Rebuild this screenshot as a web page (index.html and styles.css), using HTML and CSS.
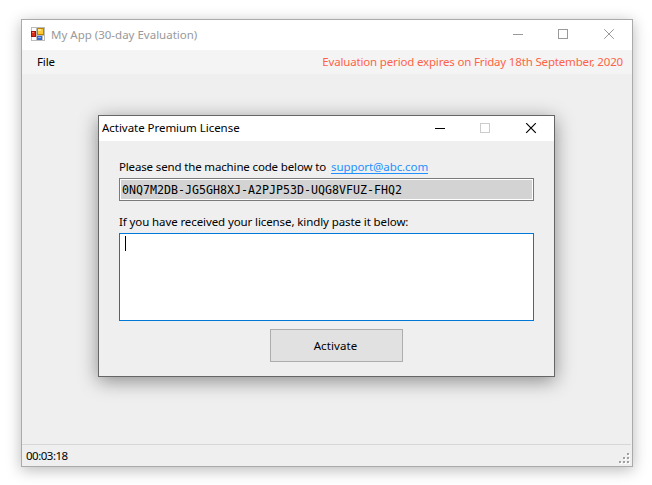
FILE: index.html
```html
<!DOCTYPE html>
<html lang="en">
<head>
<meta charset="utf-8">
<title>My App</title>
<link rel="stylesheet" href="styles.css">
</head>
<body>
<main class="window">
  <header class="titlebar">
    <svg class="app-icon" width="14" height="14" viewBox="0 0 14 14" shape-rendering="crispEdges">
      <path d="M0 0h14v14H0z" fill="#bcbcbc"/>
      <path d="M1 1h4v3H1zM1 10h4v3H1zM12 9h1v4h-1z" fill="#fff"/>
      <path d="M0 4h5v6H0z" fill="#a51208"/><path d="M1 5h3v4H1z" fill="#d8301c"/><path d="M1 5h2v1H1z" fill="#f47a60"/>
      <path d="M6 1h7v7H6z" fill="#b98200"/><path d="M7 2h5v5H7z" fill="#ffc933"/><path d="M7 2h3v2H7z" fill="#ffe58a"/>
      <path d="M6 9h5v4H6z" fill="#3567cf"/><path d="M7 10h3v1H7z" fill="#86b1ff"/>
    </svg>
    <h1 class="title app-title">My App (30-day Evaluation)</h1>
    <svg class="controls" width="112" height="12" viewBox="0 0 112 12" fill="none" stroke="currentColor" shape-rendering="crispEdges">
      <path d="M0 5.500h10M45.500 .5h9v9h-9z"/>
      <path d="M91.200 .2l9.600 9.600M100.800 .2l-9.600 9.600" shape-rendering="auto"/>
    </svg>
  </header>
  <nav class="menubar">
    <span class="file">File</span>
    <span class="notice">Evaluation period expires on Friday 18th September, 2020</span>
  </nav>
  <section class="workspace">
    <div class="dialog">
      <header class="dialog-titlebar">
        <h2 class="title dialog-title">Activate Premium License</h2>
        <svg class="dialog-controls" width="112" height="12" viewBox="0 0 112 12" fill="none" stroke="#000" shape-rendering="crispEdges">
          <path d="M0 5.500h10"/><path d="M45.500 .5h9v9h-9z" stroke="#ccc"/>
          <path d="M91.200 .2l9.600 9.600M100.800 .2l-9.600 9.600" stroke-width="1.200" shape-rendering="auto"/>
        </svg>
      </header>
      <div class="form">
        <p class="label send"><span class="send-text">Please send the machine code below to</span><a class="link">support@abc.com</a></p>
        <div class="code">0NQ7M2DB-JG5GH8XJ-A2PJP53D-UQG8VFUZ-FHQ2</div>
        <p class="label paste">If you have received your license, kindly paste it below:</p>
        <div class="license"><span class="caret"></span></div>
        <button class="activate"><span>Activate</span></button>
      </div>
    </div>
  </section>
  <footer class="statusbar">
    <span class="clock">00:03:18</span>
    <svg class="grip" width="12" height="12" viewBox="0 0 12 12" shape-rendering="crispEdges">
      <path d="M9 1h2v2H9zM5 5h2v2H5zM9 5h2v2H9zM1 9h2v2H1zM5 9h2v2H5zM9 9h2v2H9z" fill="#fff"/>
      <path d="M8 0h2v2H8zM4 4h2v2H4zM8 4h2v2H8zM0 8h2v2H0zM4 8h2v2H4zM8 8h2v2H8z" fill="#a0a0a0"/>
    </svg>
  </footer>
</main>
</body>
</html>
```
FILE: styles.css
```css
* { box-sizing: border-box; }
body {
  margin: 0;
  padding: 19px 19px 18px 21px;
  height: 485px;
  overflow: hidden;
  background: #fff;
  color: #000;
  font: 11.5px/16px "Noto Sans", "Open Sans", sans-serif;
  letter-spacing: -0.15px;
  white-space: nowrap;
}
.window {
  display: flex;
  flex-direction: column;
  width: 612px;
  height: 448px;
  border: 1px solid #aaa;
  background: #efefef;
  box-shadow: 0 3px 14px rgba(0, 0, 0, .28);
}
.titlebar {
  display: flex;
  height: 30px;
  padding: 7px 7px 0 9px;
  background: #fff;
  color: #999;
}
.title { margin: 0; font-size: inherit; font-weight: 400; line-height: 16px; }
.app-title { margin-left: 6px; letter-spacing: 0; }
.app-icon { flex: none; }
.controls { margin: 2px 0 0 auto; }
.menubar {
  display: flex;
  justify-content: space-between;
  height: 24px;
  padding: 4px 9px 0 15px;
  background: #f4f4f4;
}
.notice { color: #ff6347; letter-spacing: -0.17px; }
.workspace { flex: 1; padding: 41px 0 0 76px; }
.dialog {
  width: 457px;
  height: 262px;
  border: 1px solid #666;
  background: #efefef;
  box-shadow: 0 4px 18px rgba(0, 0, 0, .42);
}
.dialog-titlebar {
  display: flex;
  justify-content: space-between;
  height: 25px;
  padding: 4px 7px 0 3px;
  background: #fff;
}
.dialog-title { letter-spacing: -0.04px; }
.dialog-controls { margin-top: 3px; }
.form { padding: 18px 20px 0; }
.label { margin: 0; height: 16px; }
.send { display: flex; }
.send-text { width: 212px; }
.link {
  height: 15px;
  border-bottom: 1px solid #1e90ff;
  color: #1e90ff;
  letter-spacing: -0.08px;
}
.code {
  height: 23px;
  margin: 3px 0 13px;
  padding-left: 2px;
  border: 1px solid #7a7a7a;
  background: #d3d3d3;
  box-shadow: inset 0 0 0 1px #fff;
  font: 11.63px/22px "DejaVu Sans Mono", monospace;
  letter-spacing: 0;
}
.paste { letter-spacing: -0.1px; }
.license {
  height: 88px;
  margin-top: 3px;
  padding: 2px 5px;
  border: 1px solid #0078d7;
  background: #fff;
}
.caret { display: block; width: 1px; height: 15px; background: #000; }
.activate {
  display: block;
  width: 133px;
  height: 33px;
  margin: 8px 0 0 151px;
  padding: 0 2px 0 0;
  border: 1px solid #adadad;
  border-radius: 0;
  background: #e1e1e1;
  color: #000;
  font: inherit;
  letter-spacing: 0.1px;
}
.statusbar {
  display: flex;
  justify-content: space-between;
  height: 22px;
  margin-right: 1px;
  padding: 3px 0 0 4px;
  border-top: 1px solid #d7d7d7;
}
.clock { letter-spacing: -0.5px; }
.grip { margin-top: 5px; }
```
